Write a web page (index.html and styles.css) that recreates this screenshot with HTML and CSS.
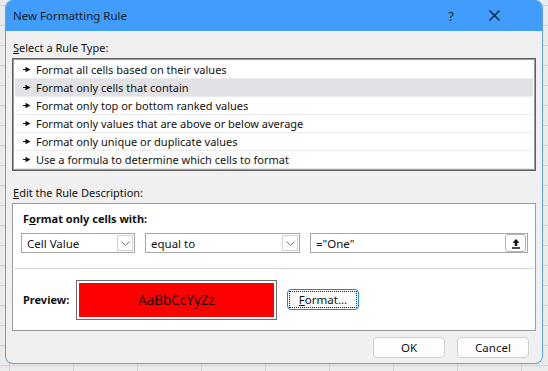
FILE: index.html
```html
<!DOCTYPE html>
<html lang="en">
<head>
  <meta charset="UTF-8">
  <title>New Formatting Rule</title>
  <link rel="stylesheet" href="styles.css">
</head>
<body>

  <div class="dialog">
    <div class="titlebar">
      <span class="title">New Formatting Rule</span>
      <span class="help">?</span>
      <span class="close">
        <svg width="11" height="11" viewBox="0 0 11 11"><path d="M0.5 0.5L10.5 10.5M10.5 0.5L0.5 10.5" stroke="#111" stroke-width="1.1"/></svg>
      </span>
    </div>

    <div class="content">
      <div class="section-label"><u>S</u>elect a Rule Type:</div>
      <div class="rule-list">
        <div class="rule-item"><svg class="pointer" width="8" height="7" viewBox="0 0 8 7"><path d="M0 3.5H3" stroke="#111" stroke-width="1"/><path d="M2.5 0.8L7.5 3.5L2.5 6.2Z" fill="#111"/></svg>Format all cells based on their values</div>
        <div class="rule-item selected"><svg class="pointer" width="8" height="7" viewBox="0 0 8 7"><path d="M0 3.5H3" stroke="#111" stroke-width="1"/><path d="M2.5 0.8L7.5 3.5L2.5 6.2Z" fill="#111"/></svg>Format only cells that contain</div>
        <div class="rule-item"><svg class="pointer" width="8" height="7" viewBox="0 0 8 7"><path d="M0 3.5H3" stroke="#111" stroke-width="1"/><path d="M2.5 0.8L7.5 3.5L2.5 6.2Z" fill="#111"/></svg>Format only top or bottom ranked values</div>
        <div class="rule-item"><svg class="pointer" width="8" height="7" viewBox="0 0 8 7"><path d="M0 3.5H3" stroke="#111" stroke-width="1"/><path d="M2.5 0.8L7.5 3.5L2.5 6.2Z" fill="#111"/></svg>Format only values that are above or below average</div>
        <div class="rule-item"><svg class="pointer" width="8" height="7" viewBox="0 0 8 7"><path d="M0 3.5H3" stroke="#111" stroke-width="1"/><path d="M2.5 0.8L7.5 3.5L2.5 6.2Z" fill="#111"/></svg>Format only unique or duplicate values</div>
        <div class="rule-item"><svg class="pointer" width="8" height="7" viewBox="0 0 8 7"><path d="M0 3.5H3" stroke="#111" stroke-width="1"/><path d="M2.5 0.8L7.5 3.5L2.5 6.2Z" fill="#111"/></svg>Use a formula to determine which cells to format</div>
      </div>

      <div class="section-label second"><u>E</u>dit the Rule Description:</div>
      <div class="desc-panel">
        <div class="cond-area">
          <div class="cond-title">F<u>o</u>rmat only cells with:</div>
          <div class="cond-row">
            <div class="combo combo-small">
              <span class="combo-text">Cell Value</span>
              <span class="combo-btn"><svg width="9" height="5" viewBox="0 0 9 5"><path d="M0.5 0.5L4.5 4.5L8.5 0.5" stroke="#777" fill="none" stroke-width="1"/></svg></span>
            </div>
            <div class="combo combo-wide">
              <span class="combo-text">equal to</span>
              <span class="combo-btn"><svg width="9" height="5" viewBox="0 0 9 5"><path d="M0.5 0.5L4.5 4.5L8.5 0.5" stroke="#777" fill="none" stroke-width="1"/></svg></span>
            </div>
            <div class="ref-input">
              <span class="combo-text">="One"</span>
              <span class="ref-btn"><svg width="10" height="11" viewBox="0 0 10 11"><path d="M5 1L1.5 4.8H3.8V8H6.2V4.8H8.5Z" fill="#111"/><path d="M1 10H9" stroke="#111" stroke-width="1.6"/></svg></span>
            </div>
          </div>
        </div>
        <div class="preview-area">
          <span class="preview-label">Preview:</span>
          <div class="preview-box"><div class="preview-fill">AaBbCcYyZz</div></div>
          <button class="btn btn-focus"><span class="focus-ring"><u>F</u>ormat...</span></button>
        </div>
      </div>

      <div class="footer">
        <button class="btn">OK</button>
        <button class="btn">Cancel</button>
      </div>
    </div>
  </div>

</body>
</html>
```

FILE: styles.css
```css
body {
  margin: 0;
  height: 371px;
  overflow: hidden;
  font-family: "Noto Sans", "Open Sans", sans-serif;
  font-size: 11px;
  color: #111;
  background-color: #ebebeb;
  background-image:
    linear-gradient(to bottom, #d2d2d2 1px, transparent 1px),
    linear-gradient(to right, #d2d2d2 1px, transparent 1px);
  background-size: 64px 20px;
  background-position: 9px 5px;
}

.dialog {
  margin-left: 5px;
  width: 536px;
  height: 363px;
  border: 1px solid #5c9fe8;
  border-top: none;
  border-radius: 8px;
  overflow: hidden;
  background-color: #f0f0f0;
  display: flex;
  flex-direction: column;
}

.titlebar {
  height: 31px;
  background-color: #409dfe;
  display: flex;
  align-items: center;
  padding-left: 7px;
  font-size: 11.5px;
  color: #1b1b1b;
}

.title {
  flex: 1;
  padding-bottom: 1px;
}

.help {
  width: 22px;
  text-align: center;
  font-size: 13px;
  margin-right: 9px;
}

.close {
  width: 46px;
  display: flex;
  justify-content: center;
  margin-right: 25px;
}

.content {
  padding: 0 6px;
  flex: 1;
  display: flex;
  flex-direction: column;
}

.section-label {
  height: 16px;
  line-height: 16px;
  margin-top: 9px;
  margin-bottom: 2px;
  padding-left: 1px;
}

.section-label.second {
  margin-top: 14px;
}

.rule-list {
  border: 1px solid #5f5f5f;
  box-shadow: inset 0 0 0 1px #9a9a9a;
  background-color: #fff;
  padding: 2px 2px 1px 2px;
}

.rule-item {
  height: 17px;
  line-height: 17px;
  border-bottom: 1px solid #ebebeb;
  display: flex;
  align-items: center;
  padding-left: 8px;
}

.rule-item.selected {
  background-color: #e1e1e6;
}

.pointer {
  margin-right: 5px;
}

.desc-panel {
  border: 1px solid #9b9b9b;
  background-color: #fff;
  height: 126px;
  display: flex;
  flex-direction: column;
}

.cond-area {
  height: 64px;
  border-bottom: 1px solid #d6d6d6;
  margin: 0 1px;
  padding-left: 7px;
}

.cond-title {
  font-weight: bold;
  padding-left: 2px;
  margin-top: 7px;
  height: 15px;
  line-height: 15px;
}

.cond-row {
  display: flex;
  gap: 10px;
  margin-top: 7px;
}

.combo, .ref-input {
  height: 20px;
  box-sizing: border-box;
  border: 1px solid #a7a7a7;
  display: flex;
  align-items: center;
  padding: 1px;
}

.combo-small {
  width: 114px;
}

.combo-wide {
  width: 155px;
}

.ref-input {
  width: 218px;
}

.combo-text {
  flex: 1;
  padding-left: 4px;
  font-size: 11.5px;
}

.combo-btn {
  width: 16px;
  height: 16px;
  box-sizing: border-box;
  border: 1px solid #d2d2d2;
  display: flex;
  align-items: center;
  justify-content: center;
}

.ref-btn {
  width: 21px;
  height: 18px;
  box-sizing: border-box;
  border: 1px solid #b4b4b4;
  border-radius: 3px;
  display: flex;
  align-items: center;
  justify-content: center;
  background-color: #fdfdfd;
}

.preview-area {
  flex: 1;
  display: flex;
  align-items: center;
  padding-left: 10px;
}

.preview-label {
  font-weight: bold;
  width: 53px;
}

.preview-box {
  width: 201px;
  height: 40px;
  box-sizing: border-box;
  border: 1px solid #6e6e6e;
  padding: 2px;
  background-color: #fff;
}

.preview-fill {
  height: 100%;
  background-color: #ff0000;
  display: flex;
  align-items: center;
  justify-content: center;
  font-size: 13.5px;
  color: #1a0000;
}

.btn {
  font-family: "Noto Sans", "Open Sans", sans-serif;
  font-size: 11.5px;
  color: #111;
  height: 21px;
  width: 72px;
  background-color: #fdfdfd;
  border: 1px solid #d0d0d0;
  border-radius: 4px;
  padding: 0;
}

.btn-focus {
  margin-left: 10px;
  border-color: #1a86e8;
  width: 72px;
  padding: 1px;
}

.focus-ring {
  display: flex;
  align-items: center;
  justify-content: center;
  height: 100%;
  box-sizing: border-box;
  border: 1px dotted #222;
}

.footer {
  display: flex;
  justify-content: flex-end;
  gap: 12px;
  margin-top: 6px;
  padding-right: 7px;
}
```
